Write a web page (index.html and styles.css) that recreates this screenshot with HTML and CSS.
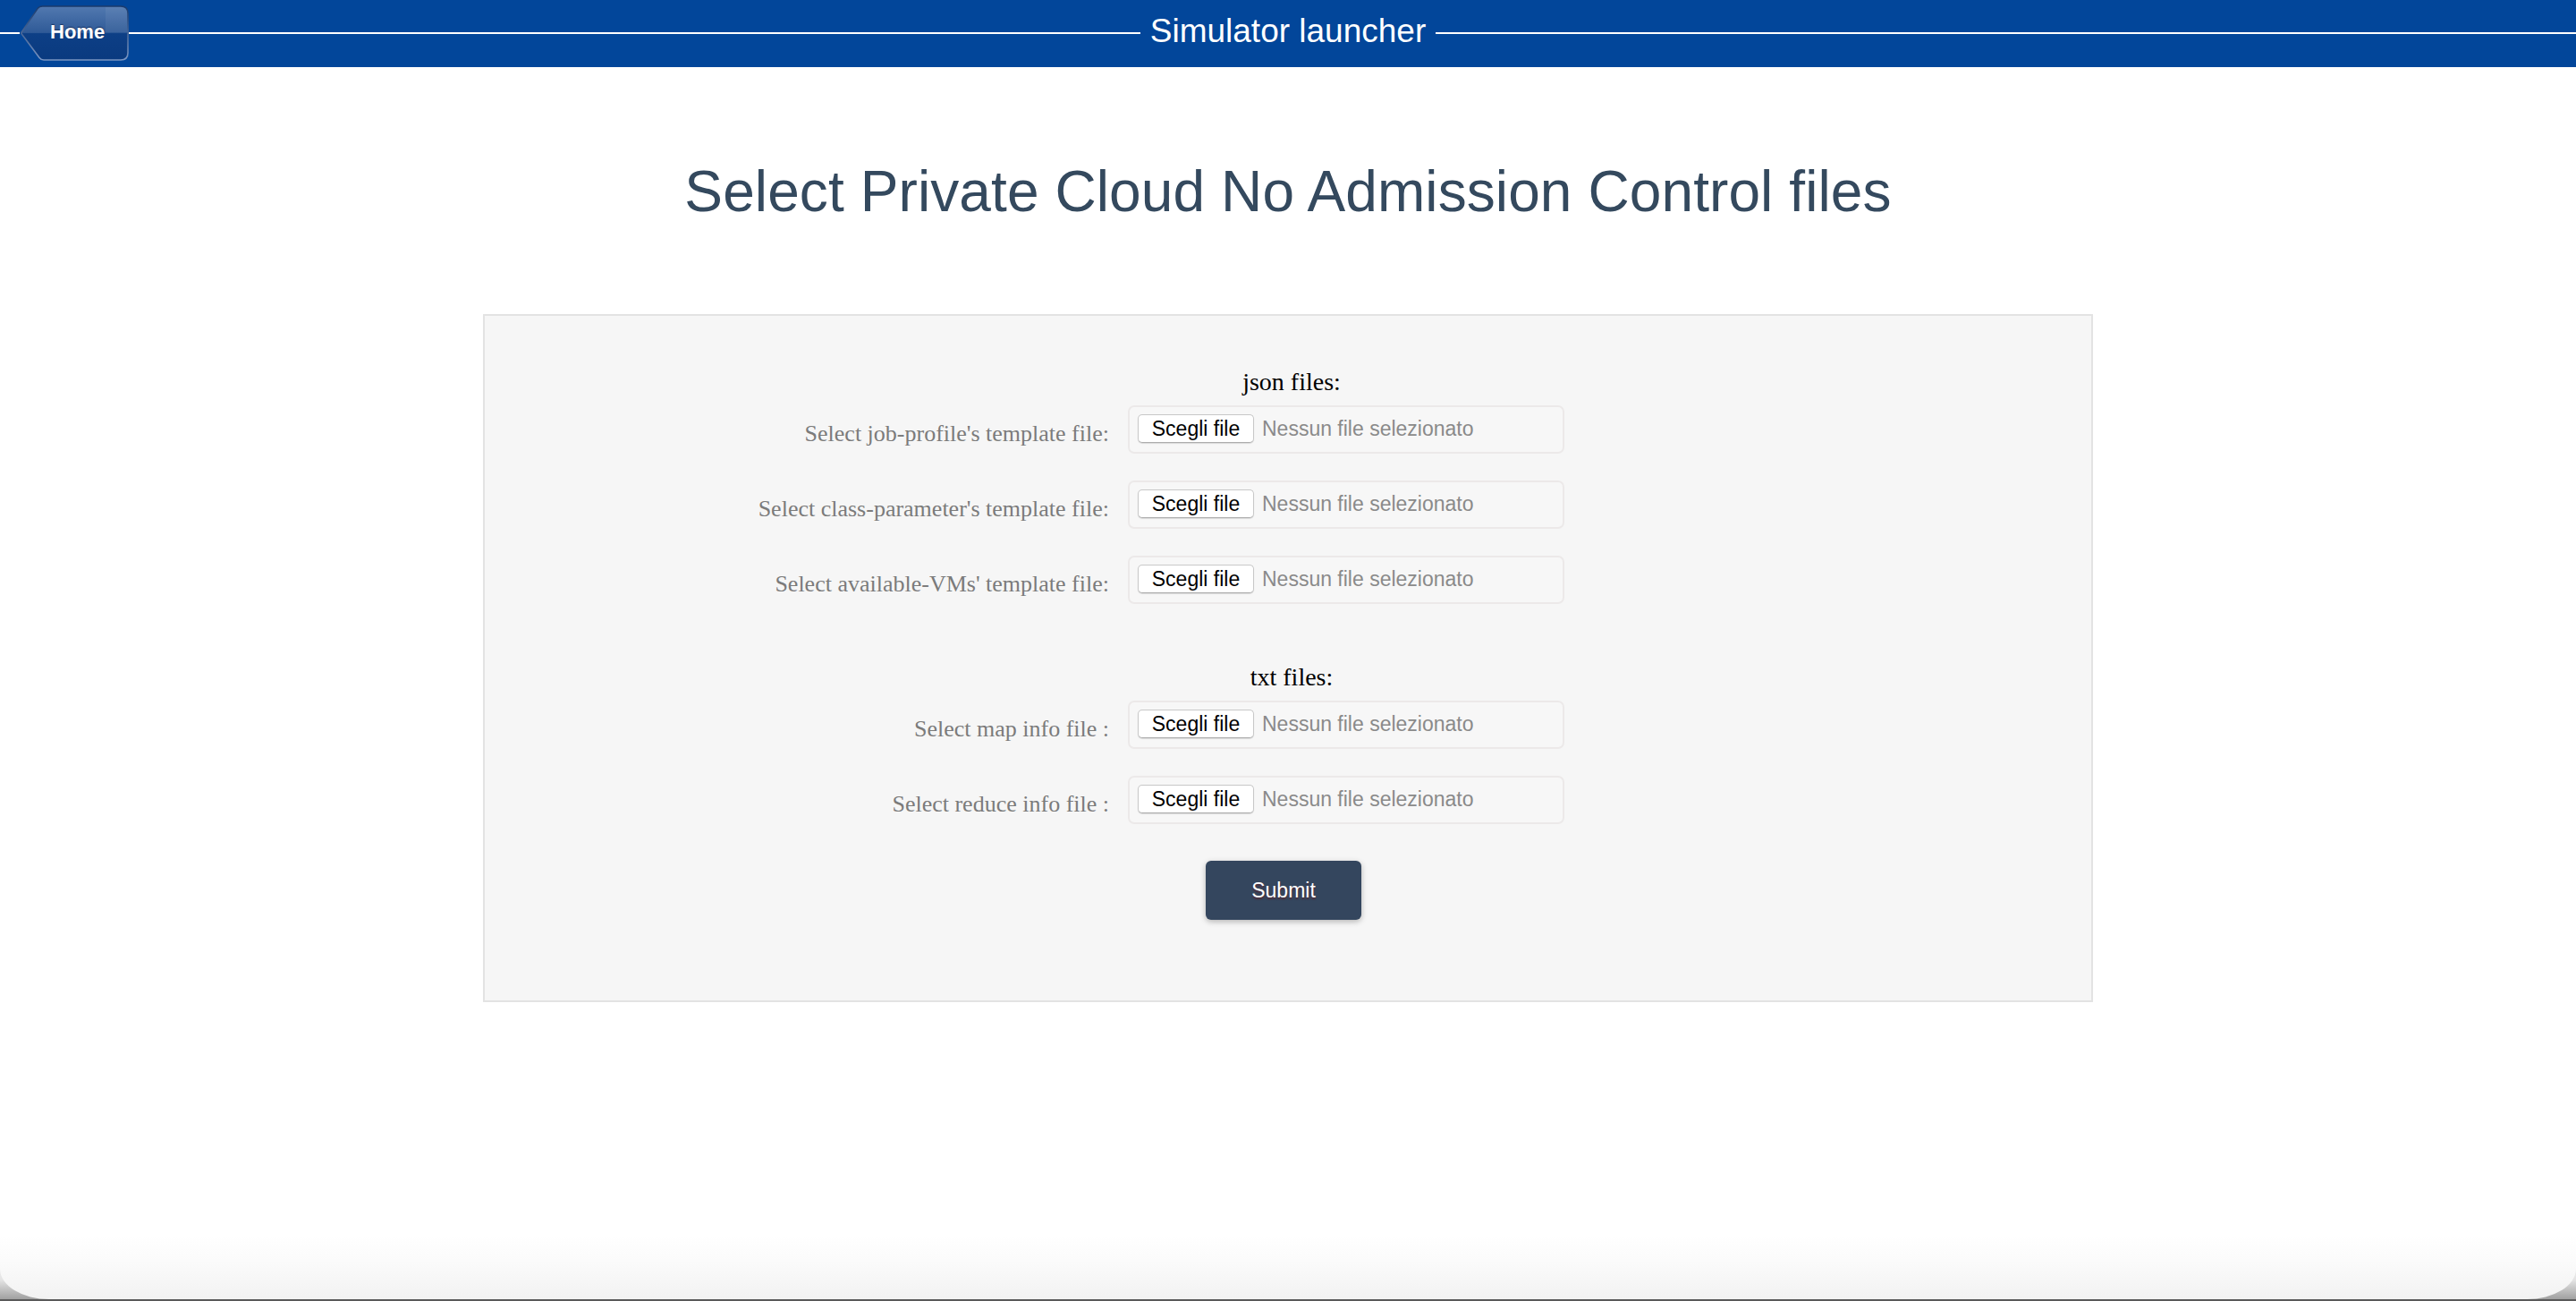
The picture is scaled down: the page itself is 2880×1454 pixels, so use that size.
FILE: index.html
```html
<!DOCTYPE html>
<html lang="it">
<head>
<meta charset="utf-8">
<title>Simulator launcher</title>
<link rel="stylesheet" href="styles.css">
</head>
<body>
<div class="app">
  <header class="topbar">
    <div class="topbar-side">
      <span class="rule rule-short"></span>
      <a class="home-btn" href="#">
        <svg class="home-shape" viewBox="0 0 122 62" width="122" height="62" aria-hidden="true">
          <defs>
            <linearGradient id="homeFill" x1="0" y1="0" x2="0" y2="1">
              <stop offset="0" stop-color="#5279b0"/>
              <stop offset="0.49" stop-color="#2f5a97"/>
              <stop offset="0.51" stop-color="#0d3f86"/>
              <stop offset="1" stop-color="#0a3a7f"/>
            </linearGradient>
            <linearGradient id="homeStroke" x1="0" y1="0" x2="0" y2="1">
              <stop offset="0" stop-color="#1a3a6c"/>
              <stop offset="1" stop-color="#7a95c2"/>
            </linearGradient>
          </defs>
          <path d="M1.5 31 L20 3.6 Q22 1 25.5 1 L113 1 Q121 1 121 9 L121 53 Q121 61 113 61 L27 61 Q24 61 22 58.4 Z" fill="url(#homeFill)" stroke="url(#homeStroke)" stroke-width="1.6"/>
          <path d="M96 2 L113 2 Q120 2 120 9 L120 30 L96 30 Z" fill="#ffffff" fill-opacity="0.06"/>
        </svg>
        <span class="home-label">Home</span>
      </a>
      <span class="rule"></span>
    </div>
    <h1 class="app-title">Simulator launcher</h1>
    <div class="topbar-side">
      <span class="rule"></span>
    </div>
  </header>

  <main class="content">
    <h2 class="page-title">Select Private Cloud No Admission Control files</h2>

    <form class="panel">
      <h3 class="group-title">json files:</h3>
      <div class="field-row">
        <span class="field-label">Select job-profile's template file:</span>
        <label class="file-input"><span class="file-btn">Scegli file</span><span class="file-name">Nessun file selezionato</span></label>
      </div>
      <div class="field-row">
        <span class="field-label">Select class-parameter's template file:</span>
        <label class="file-input"><span class="file-btn">Scegli file</span><span class="file-name">Nessun file selezionato</span></label>
      </div>
      <div class="field-row">
        <span class="field-label">Select available-VMs' template file:</span>
        <label class="file-input"><span class="file-btn">Scegli file</span><span class="file-name">Nessun file selezionato</span></label>
      </div>

      <h3 class="group-title group-second">txt files:</h3>
      <div class="field-row">
        <span class="field-label">Select map info file :</span>
        <label class="file-input"><span class="file-btn">Scegli file</span><span class="file-name">Nessun file selezionato</span></label>
      </div>
      <div class="field-row">
        <span class="field-label">Select reduce info file :</span>
        <label class="file-input"><span class="file-btn">Scegli file</span><span class="file-name">Nessun file selezionato</span></label>
      </div>

      <button class="submit" type="button">Submit</button>
    </form>
  </main>

  <div class="window-bottom">
    <div class="window-shade"></div>
  </div>
  <div class="desk-strip"></div>
</div>
</body>
</html>
```

FILE: styles.css
```css
* { box-sizing: border-box; }

html, body {
  margin: 0;
  padding: 0;
  background: #ffffff;
}

body {
  font-family: "Liberation Sans", Arial, sans-serif;
}

.app {
  display: flex;
  flex-direction: column;
  height: 1454px;
  overflow: hidden;
}

/* ---------- top bar ---------- */
.topbar {
  flex: 0 0 75px;
  height: 75px;
  background: #02469a;
  display: grid;
  grid-template-columns: 1fr auto 1fr;
  align-items: center;
}

.topbar-side {
  display: flex;
  align-items: center;
  height: 100%;
}

.rule {
  flex: 1 1 auto;
  height: 2px;
  background: #ffffff;
  margin-top: -1px;
}

.rule-short {
  flex: 0 0 22px;
}

.home-btn {
  position: relative;
  flex: 0 0 122px;
  width: 122px;
  height: 62px;
  display: flex;
  align-items: center;
  padding-left: 34px;
  text-decoration: none;
  margin-top: -1px;
}

.home-shape {
  position: absolute;
  left: 0;
  top: 0;
  display: block;
}

.home-label {
  position: relative;
  color: #ffffff;
  font-weight: 700;
  font-size: 22px;
  line-height: 26px;
  text-shadow: 0 -1px 1px rgba(0, 20, 60, 0.6);
  margin-top: -2px;
}

.app-title {
  margin: 0;
  padding: 0 11px 6px;
  color: #ffffff;
  font-weight: 400;
  font-size: 37px;
  line-height: 44px;
  white-space: nowrap;
}

/* ---------- content ---------- */
.content {
  flex: 1 1 auto;
}

.page-title {
  margin: 102px 0 0;
  text-align: center;
  font-weight: 400;
  font-size: 64px;
  line-height: 74px;
  color: #34495e;
  letter-spacing: 0.1px;
}

.panel {
  width: 1800px;
  margin: 100px auto 0;
  background: #f6f6f6;
  border: 2px solid #e3e3e3;
  padding: 58px 0 90px;
  display: flex;
  flex-direction: column;
}

.group-title {
  margin: 0 0 10px;
  text-align: center;
  font-family: "Liberation Serif", "Times New Roman", serif;
  font-weight: 400;
  font-size: 28px;
  line-height: 32px;
  color: #000000;
  padding-left: 8px;
}

.group-second {
  margin-top: 36px;
}

.field-row {
  display: grid;
  grid-template-columns: 698px 488px;
  column-gap: 21px;
  margin-bottom: 30px;
}

.field-label {
  text-align: right;
  font-family: "Liberation Serif", "Times New Roman", serif;
  font-size: 26px;
  line-height: 30px;
  color: #7b7b7b;
  padding-top: 17px;
  white-space: nowrap;
}

.file-input {
  display: flex;
  align-items: center;
  height: 54px;
  border: 2px solid #ece9e9;
  border-radius: 7px;
  background: #f7f7f7;
  padding: 0 9px;
}

.file-btn {
  flex: 0 0 130px;
  width: 130px;
  height: 32px;
  border: 1px solid #c8c8c8;
  border-bottom-color: #adadad;
  border-radius: 5px;
  background: #ffffff;
  box-shadow: 0 1px 1px rgba(0, 0, 0, 0.12);
  text-align: center;
  font-size: 23px;
  line-height: 30px;
  color: #000000;
  margin-top: -2px;
}

.file-name {
  margin-left: 9px;
  font-size: 23px;
  line-height: 30px;
  color: #8a8a8a;
  white-space: nowrap;
  margin-top: -2px;
}

.submit {
  align-self: center;
  width: 174px;
  height: 66px;
  margin: 11px 0 0 -10px;
  border: 0;
  border-radius: 6px;
  background: #34465e;
  color: #ffffff;
  font-family: "Liberation Sans", Arial, sans-serif;
  font-size: 23px;
  line-height: 30px;
  text-shadow: 0 2px 2px rgba(110, 20, 20, 0.55);
  box-shadow: 0 2px 6px rgba(0, 0, 0, 0.28);
  cursor: pointer;
}

/* ---------- window bottom edge ---------- */
.window-bottom {
  flex: 0 0 72px;
  background: linear-gradient(to bottom, #ffffff 0%, #e4e4e4 70%, #a0a0a0 100%);
}

.window-shade {
  height: 72px;
  background: linear-gradient(to bottom, #ffffff 0%, #fbfbfb 40%, #f2f2f2 100%);
  border-bottom-left-radius: 55px 34px;
  border-bottom-right-radius: 55px 34px;
}

.desk-strip {
  flex: 0 0 2px;
  background: #5a5a5a;
}
```
